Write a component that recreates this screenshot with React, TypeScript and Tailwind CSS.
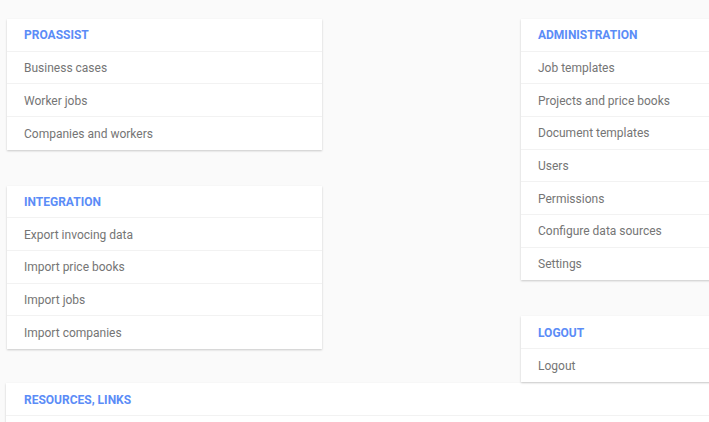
import React from "react";

interface Section {
  title: string;
  items: string[];
}

const proassist: Section = {
  title: "PROASSIST",
  items: ["Business cases", "Worker jobs", "Companies and workers"],
};

const integration: Section = {
  title: "INTEGRATION",
  items: ["Export invocing data", "Import price books", "Import jobs", "Import companies"],
};

const administration: Section = {
  title: "ADMINISTRATION",
  items: [
    "Job templates",
    "Projects and price books",
    "Document templates",
    "Users",
    "Permissions",
    "Configure data sources",
    "Settings",
  ],
};

const logout: Section = {
  title: "LOGOUT",
  items: ["Logout"],
};

const MenuCard: React.FC<{ section: Section; className?: string }> = ({ section, className }) => (
  <div className={`bg-white shadow-[0_1px_2px_rgba(0,0,0,0.2)] ${className ?? ""}`}>
    <div className="h-[32.67px] flex items-center pt-[1px] px-[17px] border-b border-[#f2f2f2] text-[12px] font-bold text-[#5b8cf7]">
      {section.title}
    </div>
    {section.items.map((item, i) => (
      <div
        key={item}
        className={`h-[32.67px] flex items-center pt-[1px] px-[17px] text-[12px] text-[#757575] ${
          i < section.items.length - 1 ? "border-b border-[#f2f2f2]" : ""
        }`}
      >
        {item}
      </div>
    ))}
  </div>
);

export default function App() {
  return (
    <div
      className="w-[709px] h-[422px] overflow-hidden bg-[#fafafa]"
      style={{ fontFamily: "Roboto, 'Liberation Sans', sans-serif" }}
    >
      <div className="flex items-start h-[383px] pt-[19px]">
        <div className="w-[315px] ml-[7px] shrink-0 flex flex-col gap-[36px]">
          <MenuCard section={proassist} />
          <MenuCard section={integration} />
        </div>
        <div className="w-[315px] ml-[199px] shrink-0 flex flex-col gap-[36px]">
          <MenuCard section={administration} />
          <MenuCard section={logout} />
        </div>
      </div>
      <div className="ml-[6px] w-[900px] bg-white shadow-[0_1px_2px_rgba(0,0,0,0.2)]">
        <div className="h-[33px] flex items-center pt-[2px] px-[18px] border-b border-[#f2f2f2] text-[12px] font-bold text-[#5b8cf7]">
          RESOURCES, LINKS
        </div>
        <div className="h-[33px]" />
      </div>
    </div>
  );
}
